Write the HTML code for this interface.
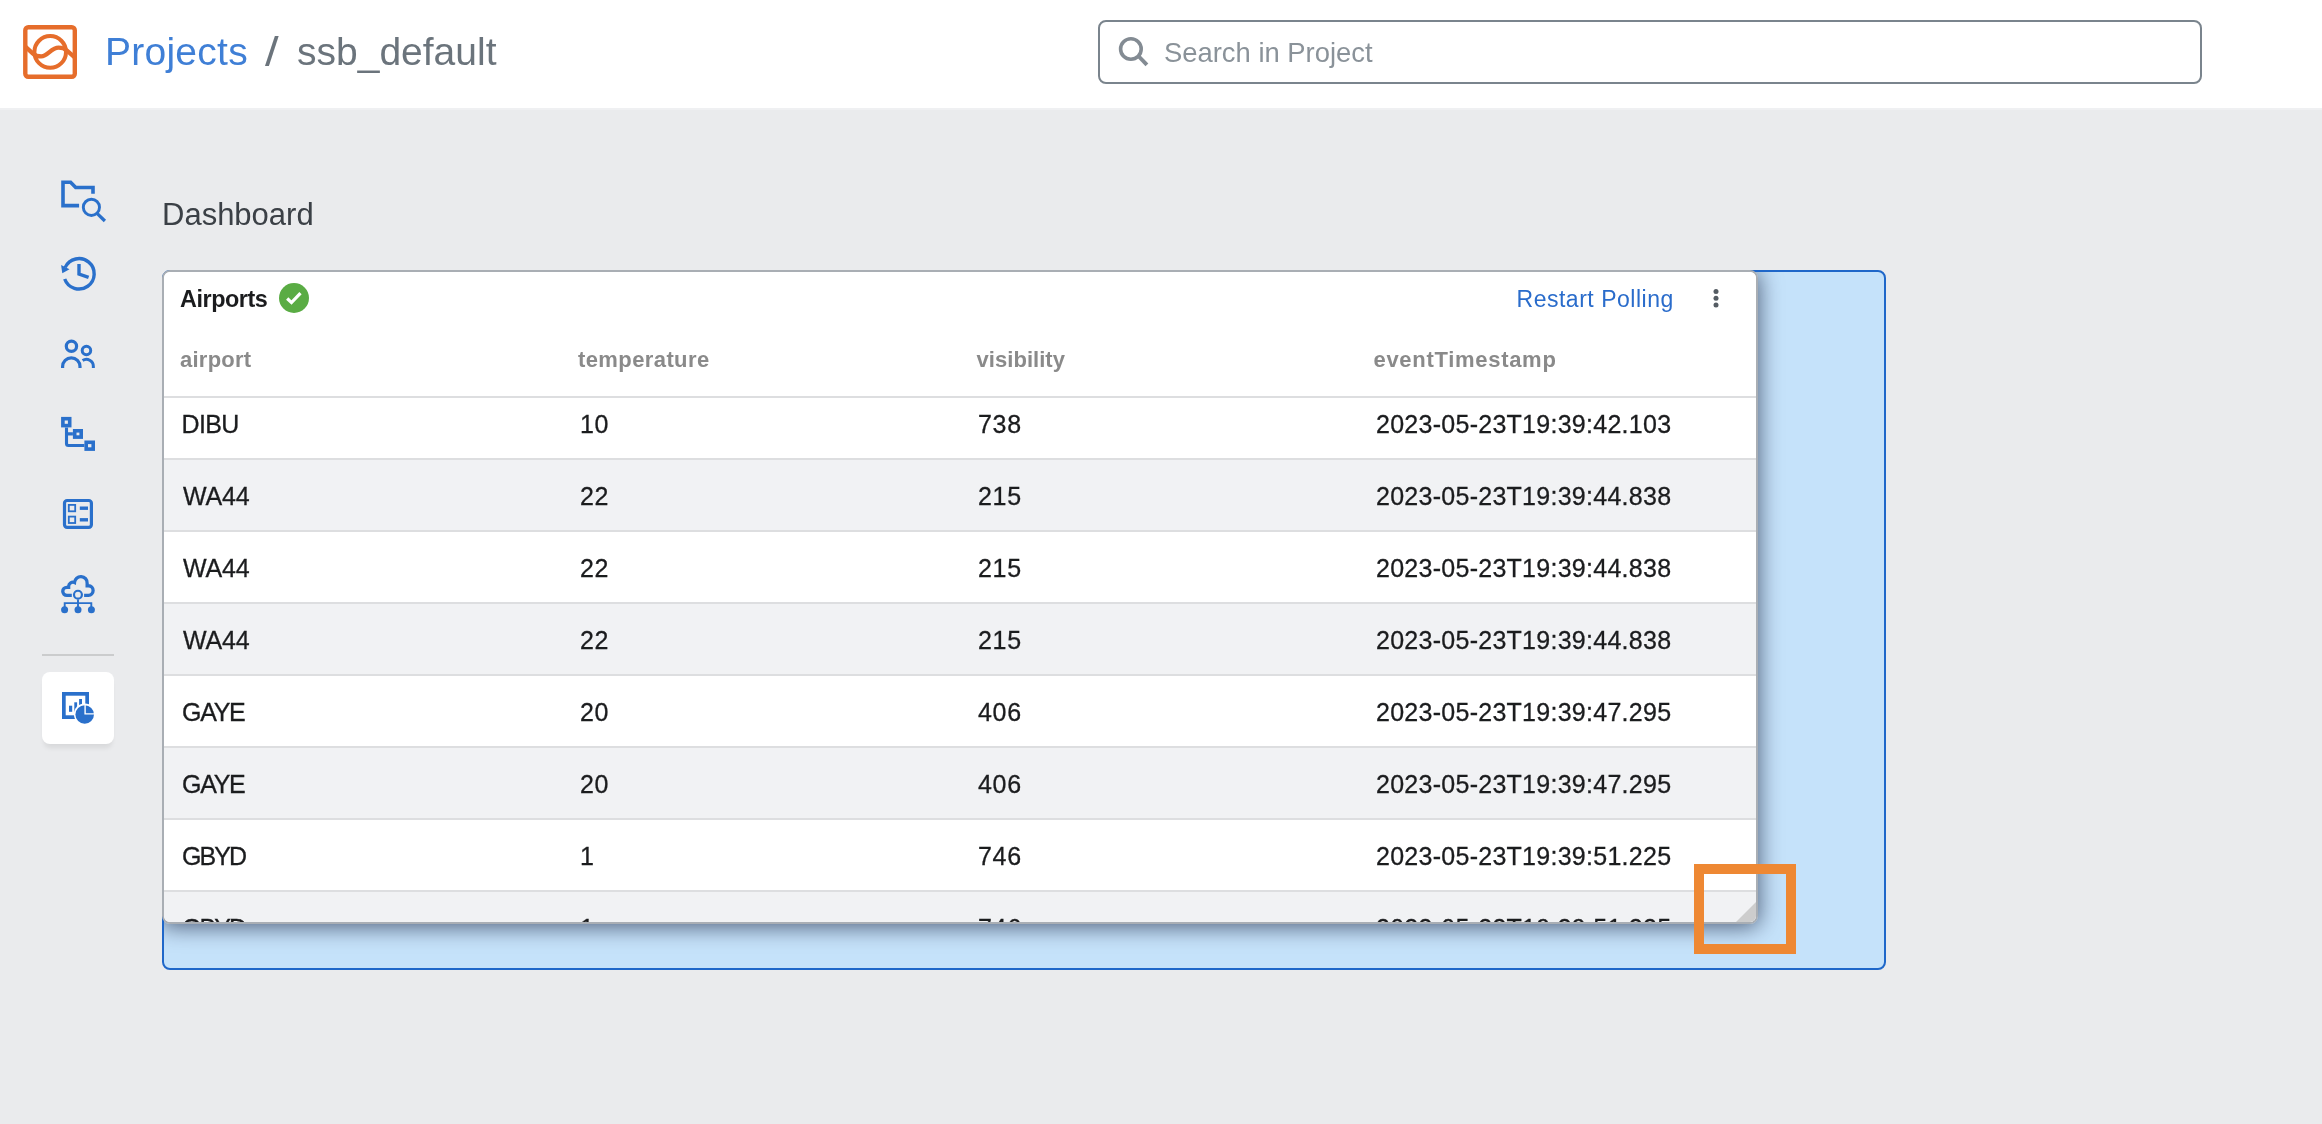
<!DOCTYPE html>
<html lang="en">
<head>
<meta charset="utf-8">
<title>ssb_default - Dashboard</title>
<style>
*{box-sizing:border-box;margin:0;padding:0}
html,body{width:2322px;height:1124px;overflow:hidden;background:#eaebed;font-family:"Liberation Sans",sans-serif;color:#1b1c1e}
#app{position:absolute;left:0;top:0;width:2322px;height:1124px;overflow:hidden;will-change:transform;background:#eaebed}
.abs{position:absolute}
#topbar{position:absolute;left:0;top:0;width:2322px;height:108px;background:#fff}
#topline{position:absolute;left:0;top:108px;width:2322px;height:2px;background:#eff0f2}
#logo{position:absolute;left:15px;top:17px}
.crumb{position:absolute;top:28px;height:48px;line-height:48px;font-size:39px;white-space:nowrap}
#c1{left:105px;color:#3f7fd6;letter-spacing:.25px}
#c2{left:265px;color:#6b747c;font-size:41px;transform:scaleX(1.2);transform-origin:0 50%}
#c3{left:297px;color:#6b747c}
#search{position:absolute;left:1098px;top:20px;width:1104px;height:64px;border:2px solid #7a848d;border-radius:8px;background:#fff}
#search svg{position:absolute;left:10px;top:8px}
#search span{position:absolute;left:64px;top:0;line-height:61px;font-size:27.4px;color:#8a9299;white-space:nowrap}
#side{position:absolute;left:0;top:0}
#sep{position:absolute;left:42px;top:654px;width:72px;height:2px;background:#cbcccd}
#tile{position:absolute;left:42px;top:672px;width:72px;height:72px;background:#fff;border-radius:8px;box-shadow:0 6px 5px -2px rgba(0,0,0,.08)}
#title{position:absolute;left:162px;top:194.5px;line-height:40px;font-size:31px;color:#3b4046;white-space:nowrap}
#panel{position:absolute;left:162px;top:270px;width:1724px;height:700px;background:#c5e2fa;border:2px solid #1f67c9;border-radius:8px;overflow:hidden}
#cardshadow{position:absolute;left:-2px;top:-2px;width:1596px;height:654px;border-radius:8px;box-shadow:0 2px 22px 1px rgba(0,8,36,.6)}
#card{position:absolute;left:162px;top:270px;width:1596px;height:654px;background:#fff;border-radius:8px;border:2px solid #a9aeb4;overflow:hidden}
#card .h1{position:absolute;left:16px;top:11px;line-height:32px;font-size:23.4px;font-weight:bold;color:#1b1c1e;letter-spacing:-.45px}
#ok{position:absolute;left:114px;top:10px}
#restart{position:absolute;left:1352.5px;top:11px;line-height:32px;font-size:23px;color:#2a6ccb;white-space:nowrap;letter-spacing:.52px}
#kebab{position:absolute;left:1546px;top:16px}
.th{position:absolute;top:72px;line-height:32px;font-size:22px;font-weight:bold;color:#8a8a8a;white-space:nowrap}
.row{position:absolute;left:0;width:1592px;height:72px;border-bottom:2px solid #dddee0;background:#fff}
.row.g{background:#f1f2f4}
.row span{position:absolute;top:20px;line-height:32px;font-size:25px;color:#1b1c1e;white-space:nowrap;-webkit-text-stroke:.3px #1b1c1e}
.row .a{left:19px}.row .b{left:416px;letter-spacing:.7px}.row .c{left:814px;letter-spacing:.7px}.row .d{left:1212px;letter-spacing:.27px}
.wa{letter-spacing:-.2px}.ga{letter-spacing:-1.3px;margin-left:-1px}.gb{letter-spacing:-1.9px;margin-left:-1px}.di{letter-spacing:-.6px;margin-left:-1.5px}
#hdrline{position:absolute;left:0;top:124px;width:1592px;height:2px;background:#dddee0}
#grip{position:absolute;right:0;bottom:0;width:0;height:0;border-left:20px solid transparent;border-bottom:20px solid #cdcdcd}
#obox{position:absolute;left:1694px;top:864px;width:102px;height:90px;border:10px solid #ee8833}
</style>
</head>
<body>
<div id="app">
<div id="topbar">
  <svg id="logo" width="70" height="70" viewBox="0 0 70 70" fill="none" stroke="#e66d2b">
    <rect x="10.3" y="10.2" width="49.5" height="49.6" rx="3" stroke-width="4.4"/>
    <circle cx="35.2" cy="34.9" r="15.8" stroke-width="4"/>
    <path d="M10.3,29.6 L18,36.6 C21,39.3 23.5,39.4 26.2,39.4 C33,39.4 36,30.6 43.6,30.6 C47,30.6 49.5,31.4 52,33.6 L59.7,40.3" stroke-width="4.3"/>
  </svg>
  <div class="crumb" id="c1">Projects</div>
  <div class="crumb" id="c2">/</div>
  <div class="crumb" id="c3">ssb_default</div>
  <div id="search">
    <svg width="48" height="48" viewBox="0 0 48 48" fill="none" stroke="#838b93"><circle cx="20.9" cy="19" r="10.3" stroke-width="3.6"/><path d="M28.4,26 L36.9,34.9" stroke-width="3.9"/></svg>
    <span>Search in Project</span>
  </div>
</div>
<div id="topline"></div>

<div id="sep"></div>
<div id="tile"></div>
<svg id="side" width="130" height="780" viewBox="0 0 130 780" fill="none" stroke="#2a70cb">
  <!-- explorer -->
  <g transform="translate(48,168)">
    <path d="M31.1,37.6 H15 V14.3 H22.6 L27.7,19.5 H45 V25.8" stroke-width="3.6"/>
    <circle cx="43.4" cy="39.35" r="8.1" stroke-width="2.9"/>
    <path d="M49.3,45.6 L56.9,53" stroke-width="3.3"/>
  </g>
  <!-- history -->
  <g transform="translate(48,240)">
    <path d="M16.7,39 A15.2,15.2 0 1 0 17.2,27.4" stroke-width="3.4"/>
    <path d="M13.1,24.9 L21.5,29.3 L14.3,33.3 Z" fill="#2a70cb" stroke="none"/>
    <path d="M31,24 V34 L40.6,37.4" stroke-width="3.4"/>
  </g>
  <!-- users -->
  <g transform="translate(48,320)">
    <circle cx="23.44" cy="26.3" r="5.15" stroke-width="3.2"/>
    <circle cx="38.45" cy="30.5" r="4.25" stroke-width="3"/>
    <path d="M14.6,47.9 V46.5 A8.7,8.7 0 0 1 32,46.5 V47.9" stroke-width="3.2"/>
    <path d="M34.6,40.6 A6.9,6.9 0 0 1 45.35,46.4 V47.9" stroke-width="3"/>
  </g>
  <!-- tree -->
  <g transform="translate(48,400)">
    <rect x="14.9" y="18.7" width="6.8" height="6.9" stroke-width="3.6"/>
    <rect x="26.7" y="30.8" width="6.5" height="6.3" stroke-width="3.6"/>
    <rect x="38.2" y="42.3" width="7" height="6.8" stroke-width="3.6"/>
    <path d="M18.5,27.4 V43.5 Q18.5,45.5 20.5,45.5 H36.4 M18.5,33.9 H24.9" stroke-width="3.1"/>
  </g>
  <!-- list -->
  <g transform="translate(48,480)">
    <rect x="16.5" y="20.5" width="26.9" height="26.8" rx="2.6" stroke-width="3.2"/>
    <rect x="20.8" y="24.9" width="6.4" height="6.4" stroke-width="1.8"/>
    <rect x="20.8" y="36.6" width="6.4" height="6.4" stroke-width="1.8"/>
    <rect x="31.8" y="26.5" width="8.2" height="3.4" fill="#2a70cb" stroke="none"/>
    <rect x="31.8" y="38.1" width="8.2" height="3.4" fill="#2a70cb" stroke="none"/>
  </g>
  <!-- cloud -->
  <g transform="translate(48,560)">
    <path d="M23.8,35.4 H18.8 A4.05,4.05 0 0 1 18.8,27.3 H20.65 V26.15 A4.25,4.25 0 0 1 26.5,22.5 A6.32,6.32 0 0 1 39.15,23.3 V25.75 H40.5 A4.83,4.83 0 0 1 40.5,35.4 H36.1" stroke-width="3.3"/>
    <circle cx="29.95" cy="34.7" r="3.95" stroke-width="2.2"/>
    <path d="M30,39.5 V48 M16.7,48 V43.15 H43.3 V48" stroke-width="1.9"/>
    <circle cx="16.6" cy="49.8" r="3.5" fill="#2a70cb" stroke="none"/>
    <circle cx="30" cy="49.8" r="3.5" fill="#2a70cb" stroke="none"/>
    <circle cx="43.4" cy="49.8" r="3.5" fill="#2a70cb" stroke="none"/>
  </g>
  <!-- dashboard (active) -->
  <g>
    <rect x="63.85" y="693.85" width="23.3" height="23.3" stroke-width="3.7"/>
    <rect x="69" y="705.7" width="3.2" height="6.1" fill="#2a70cb" stroke="none"/>
    <rect x="74.3" y="702.3" width="2.8" height="9.5" fill="#2a70cb" stroke="none"/>
    <rect x="79.1" y="699" width="2.9" height="12.8" fill="#2a70cb" stroke="none"/>
    <circle cx="84.8" cy="714.3" r="10.9" fill="#fff" stroke="none"/>
    <circle cx="84.7" cy="714.5" r="9.3" fill="#2a70cb" stroke="none"/>
    <path d="M85.1,704 V713.9 H95" stroke="#fff" stroke-width="1.4"/>
  </g>
</svg>

<div id="title">Dashboard</div>
<div id="panel"><div id="cardshadow"></div></div>
<div id="card">
  <div class="row" style="top:116px"><span class="a di">DIBU</span><span class="b">10</span><span class="c">738</span><span class="d">2023-05-23T19:39:42.103</span></div>
  <div class="row g" style="top:188px"><span class="a wa">WA44</span><span class="b">22</span><span class="c">215</span><span class="d">2023-05-23T19:39:44.838</span></div>
  <div class="row" style="top:260px"><span class="a wa">WA44</span><span class="b">22</span><span class="c">215</span><span class="d">2023-05-23T19:39:44.838</span></div>
  <div class="row g" style="top:332px"><span class="a wa">WA44</span><span class="b">22</span><span class="c">215</span><span class="d">2023-05-23T19:39:44.838</span></div>
  <div class="row" style="top:404px"><span class="a ga">GAYE</span><span class="b">20</span><span class="c">406</span><span class="d">2023-05-23T19:39:47.295</span></div>
  <div class="row g" style="top:476px"><span class="a ga">GAYE</span><span class="b">20</span><span class="c">406</span><span class="d">2023-05-23T19:39:47.295</span></div>
  <div class="row" style="top:548px"><span class="a gb">GBYD</span><span class="b">1</span><span class="c">746</span><span class="d">2023-05-23T19:39:51.225</span></div>
  <div class="row g" style="top:620px"><span class="a gb">GBYD</span><span class="b">1</span><span class="c">746</span><span class="d">2023-05-23T19:39:51.225</span></div>
  <div class="abs" style="left:0;top:0;width:1592px;height:124px;background:#fff"></div>
  <div id="hdrline"></div>
  <div class="h1">Airports</div>
  <svg id="ok" width="32" height="32" viewBox="0 0 32 32"><circle cx="16" cy="16" r="15" fill="#5aac44"/><path d="M9.2,16.5 L13.5,20.6 L22.5,11.1" fill="none" stroke="#fff" stroke-width="3.2"/></svg>
  <div id="restart">Restart Polling</div>
  <svg id="kebab" width="12" height="24" viewBox="0 0 12 24" fill="#555c63"><circle cx="6" cy="3.6" r="2.5"/><circle cx="6" cy="10.3" r="2.5"/><circle cx="6" cy="17" r="2.5"/></svg>
  <div class="th" style="left:16px;letter-spacing:.25px">airport</div>
  <div class="th" style="left:414px;letter-spacing:.4px">temperature</div>
  <div class="th" style="left:812.5px;letter-spacing:.05px">visibility</div>
  <div class="th" style="left:1209.5px;letter-spacing:.7px">eventTimestamp</div>
  <div id="grip"></div>
</div>
<div id="obox"></div>
</div>
</body>
</html>
